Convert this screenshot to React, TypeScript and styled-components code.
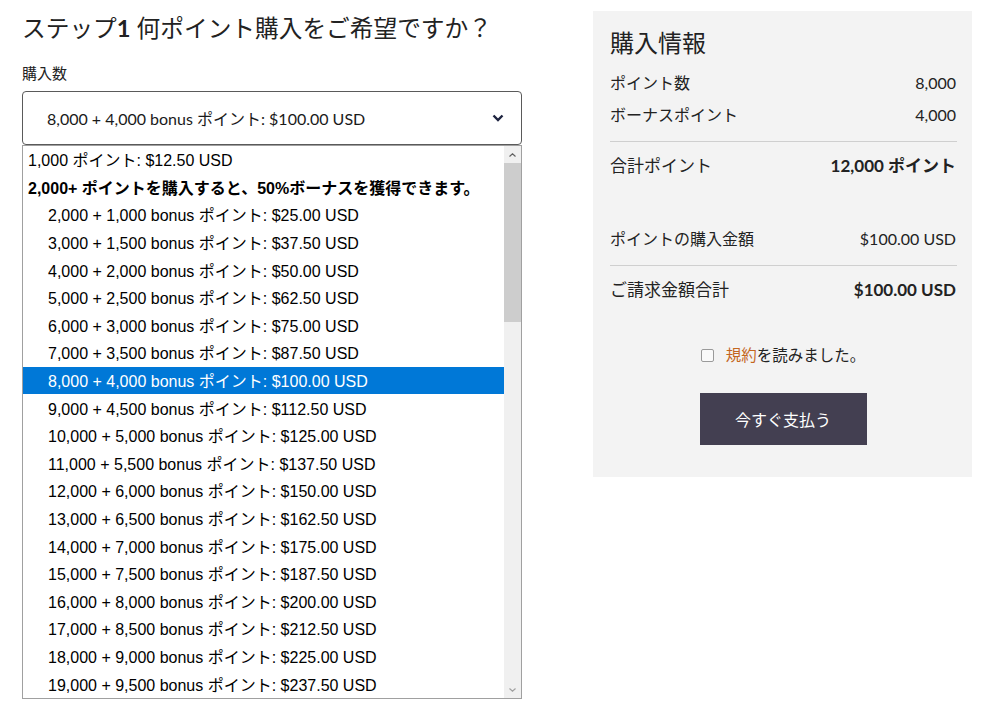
import styled, { createGlobalStyle } from 'styled-components'

/**
 * Data
 */
const tiers = Array.from({ length: 18 }, (_, i) => {
  const base = (i + 2) * 1000
  const bonus = base / 2
  const price = (base * 0.0125).toFixed(2)
  return {
    value: base,
    label: `${base.toLocaleString('en-US')} + ${bonus.toLocaleString('en-US')} bonus ポイント: $${price} USD`
  }
})

const selected = 8000

/**
 * Component
 */
const App = () => {
  return (
    <>
      <GlobalStyle />
      <Page>
        <Left>
          <Title>ステップ<b>1</b> 何ポイント購入をご希望ですか？</Title>
          <FieldLabel>購入数</FieldLabel>
          <SelectBox>
            <span>8,000 + 4,000 bonus ポイント: $100.00 USD</span>
            <svg width='12' height='8' viewBox='0 0 12 8'>
              <path d='M1.5 1.5 L6 6 L10.5 1.5' fill='none' stroke='#1e2440' strokeWidth='2.4' />
            </svg>
          </SelectBox>
          <Popup>
            <Options>
              <Option>1,000 ポイント: $12.50 USD</Option>
              <GroupHeader>2,000+ ポイントを購入すると、50%ボーナスを獲得できます。</GroupHeader>
              {tiers.map((t) => (
                <Option key={t.value} $indent $active={t.value === selected}>{t.label}</Option>
              ))}
            </Options>
            <Scrollbar>
              <ScrollArrow>
                <svg width='7' height='4' viewBox='0 0 7 4'>
                  <path d='M0.5 3.5 L3.5 0.8 L6.5 3.5' fill='none' stroke='#606060' strokeWidth='1.2' />
                </svg>
              </ScrollArrow>
              <Thumb />
              <Track />
              <ScrollArrow>
                <svg width='7' height='4' viewBox='0 0 7 4'>
                  <path d='M0.5 0.5 L3.5 3.2 L6.5 0.5' fill='none' stroke='#a0a0a0' strokeWidth='1.2' />
                </svg>
              </ScrollArrow>
            </Scrollbar>
          </Popup>
        </Left>

        <Summary>
          <SummaryTitle>購入情報</SummaryTitle>
          <Row>
            <span>ポイント数</span>
            <span>8,000</span>
          </Row>
          <Row $gap={8}>
            <span>ボーナスポイント</span>
            <span>4,000</span>
          </Row>
          <Divider />
          <Row $big>
            <span>合計ポイント</span>
            <strong>12,000 ポイント</strong>
          </Row>
          <Row $gap={49}>
            <span>ポイントの購入金額</span>
            <span>$100.00 USD</span>
          </Row>
          <Divider />
          <Row $big>
            <span>ご請求金額合計</span>
            <strong>$100.00 USD</strong>
          </Row>
          <Agree>
            <Checkbox />
            <span><TermsLink>規約</TermsLink>を読みました。</span>
          </Agree>
          <PayButton>今すぐ支払う</PayButton>
        </Summary>
      </Page>
    </>
  )
}

/**
 * Styled Component
 */
const GlobalStyle = createGlobalStyle`
  body {
    margin: 0;
    background: #fff;
    font-family: Lato, "Noto Sans CJK JP", sans-serif;
    color: #222;
  }
`

const Page = styled.div`
  display: flex;
  align-items: flex-start;
  gap: 71px;
  padding: 11px 22px 0;
`

const Left = styled.div`
  width: 500px;
  display: flex;
  flex-direction: column;
`

const Title = styled.h1`
  margin: 0;
  font-size: 23.7px;
  line-height: 34px;
  font-weight: 400;
  color: #222;

  b {
    font-weight: 700;
  }
`

const FieldLabel = styled.div`
  margin-top: 18px;
  font-size: 15px;
  line-height: 20px;
  color: #222;
`

const SelectBox = styled.div`
  margin-top: 8px;
  height: 54px;
  box-sizing: border-box;
  border: 1px solid #5a5a5a;
  border-radius: 4px;
  display: flex;
  align-items: center;
  justify-content: space-between;
  padding: 0 17px 0 24px;
  font-size: 16px;
  color: #1a1a1a;
`

const Popup = styled.div`
  height: 554px;
  box-sizing: border-box;
  border: 1px solid #a0a0a0;
  display: flex;
  background: #fff;
  overflow: hidden;
`

const Options = styled.div`
  flex: 1;
  display: flex;
  flex-direction: column;
  font-family: "Liberation Sans", "Noto Sans CJK JP", sans-serif;
  font-size: 16px;
`

const Option = styled.div<{ $indent?: boolean; $active?: boolean }>`
  height: 27.6px;
  flex-shrink: 0;
  display: flex;
  align-items: center;
  padding-left: ${(p) => (p.$indent ? '25px' : '5px')};
  padding-bottom: 1px;
  box-sizing: border-box;
  white-space: nowrap;
  color: ${(p) => (p.$active ? '#fff' : '#000')};
  background: ${(p) => (p.$active ? '#0078d7' : 'transparent')};
`

const GroupHeader = styled(Option)`
  font-weight: 700;
`

const Scrollbar = styled.div`
  width: 17px;
  display: flex;
  flex-direction: column;
  background: #f0f0f0;
`

const ScrollArrow = styled.div`
  height: 17px;
  display: flex;
  align-items: center;
  justify-content: center;
`

const Thumb = styled.div`
  height: 159px;
  background: #cdcdcd;
`

const Track = styled.div`
  flex: 1;
`

const Summary = styled.div`
  width: 379px;
  box-sizing: border-box;
  background: #f3f3f3;
  padding: 16px 16px 32px 17px;
  display: flex;
  flex-direction: column;
`

const SummaryTitle = styled.h2`
  margin: 0 0 12px;
  font-size: 24px;
  line-height: 32px;
  font-weight: 400;
  color: #222;
`

const Row = styled.div<{ $big?: boolean; $gap?: number }>`
  display: flex;
  justify-content: space-between;
  align-items: center;
  line-height: 24px;
  margin-top: ${(p) => p.$gap ?? 0}px;
  font-size: ${(p) => (p.$big ? '17px' : '16px')};
  color: #222;

  strong {
    font-weight: 700;
  }
`

const Divider = styled.hr`
  margin: 14px 0 12px;
  border: none;
  border-top: 1px solid #cfcfcf;
  width: 347px;
`

const Agree = styled.label`
  margin-top: 41px;
  display: flex;
  align-items: center;
  justify-content: center;
  gap: 12px;
  font-size: 15.5px;
  line-height: 24px;
  color: #222;
`

const Checkbox = styled.span`
  width: 11px;
  height: 11px;
  border: 1px solid #9a9a9a;
  border-radius: 2px;
  background: #fafafa;
`

const TermsLink = styled.a`
  color: #c4661f;
  text-decoration: none;
`

const PayButton = styled.button`
  margin: 26px auto 0;
  width: 167px;
  height: 52px;
  border: none;
  background: #433f51;
  color: #fff;
  font-family: Lato, "Noto Sans CJK JP", sans-serif;
  font-size: 16px;
`

export default App
